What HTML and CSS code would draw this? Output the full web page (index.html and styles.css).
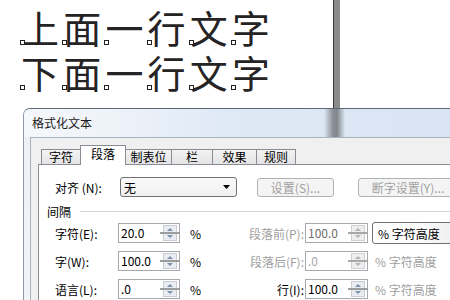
FILE: index.html
```html
<!DOCTYPE html>
<html lang="zh-CN">
<head>
<meta charset="utf-8">
<title>格式化文本</title>
<link rel="stylesheet" href="styles.css">
</head>
<body>
<div class="screen">
  <div class="canvas">
    <div class="page">
      <div class="line">
        <span class="ch">上</span><span class="ch">面</span><span class="ch">一</span><span class="ch">行</span><span class="ch">文</span><span class="ch">字</span>
      </div>
      <div class="line">
        <span class="ch">下</span><span class="ch">面</span><span class="ch">一</span><span class="ch">行</span><span class="ch">文</span><span class="ch">字</span>
      </div>
    </div>
    <div class="edge"></div>
    <div class="pasteboard"></div>
  </div>

  <div class="dialog">
    <div class="titlebar">格式化文本</div>
    <div class="frame">
      <div class="client">
        <div class="tabs">
          <div class="tab t1">字符</div>
          <div class="tab t2 active">段落</div>
          <div class="tab t3">制表位</div>
          <div class="tab t4">栏</div>
          <div class="tab t5">效果</div>
          <div class="tab t6">规则</div>
        </div>
        <div class="panel">
          <div class="row first">
            <span class="lab wide">对齐 (N):</span>
            <div class="combo align">
              <span>无</span>
              <svg class="arrow" width="7" height="4" viewBox="0 0 7 4"><path d="M0 0h7L3.5 4z" fill="#000"/></svg>
            </div>
            <div class="btn b1">设置(S)...</div>
            <div class="btn b2">断字设置(Y)...</div>
          </div>

          <div class="group"><span>间隔</span><i class="rule"></i></div>

          <div class="row">
            <span class="lab">字符(E):</span>
            <div class="spin"><span class="val">20.0</span>
              <svg class="spinner" width="20" height="16" viewBox="0 0 20 16"><rect x="3.5" y="0.5" width="13" height="15" fill="#e9ecf0" stroke="#c9cdd2"/><rect x="0" y="7" width="20" height="2" fill="#9c9c9c"/><path d="M7 6l3-3 3 3z" fill="#7e90ab"/><path d="M7 10l3 3 3-3z" fill="#7e90ab"/></svg>
            </div>
            <span class="unit">%</span>
            <span class="rlab dis">段落前(P):</span>
            <div class="spin r semi"><span class="val">100.0</span>
              <svg class="spinner" width="20" height="16" viewBox="0 0 20 16"><rect x="3.5" y="0.5" width="13" height="15" fill="#eeeeee" stroke="#d0d0d0"/><rect x="0" y="7" width="20" height="2" fill="#a8a8a8"/><path d="M7 6l3-3 3 3z" fill="#b4b4b4"/><path d="M7 10l3 3 3-3z" fill="#b4b4b4"/></svg>
            </div>
            <div class="combo tailbox">% 字符高度</div>
          </div>

          <div class="row">
            <span class="lab">字(W):</span>
            <div class="spin"><span class="val">100.0</span>
              <svg class="spinner" width="20" height="16" viewBox="0 0 20 16"><rect x="3.5" y="0.5" width="13" height="15" fill="#e9ecf0" stroke="#c9cdd2"/><rect x="0" y="7" width="20" height="2" fill="#9c9c9c"/><path d="M7 6l3-3 3 3z" fill="#7e90ab"/><path d="M7 10l3 3 3-3z" fill="#7e90ab"/></svg>
            </div>
            <span class="unit">%</span>
            <span class="rlab dis">段落后(F):</span>
            <div class="spin r dis"><span class="val">.0</span>
              <svg class="spinner" width="20" height="16" viewBox="0 0 20 16"><rect x="3.5" y="0.5" width="13" height="15" fill="#eeeeee" stroke="#d0d0d0"/><rect x="0" y="7" width="20" height="2" fill="#a8a8a8"/><path d="M7 6l3-3 3 3z" fill="#b4b4b4"/><path d="M7 10l3 3 3-3z" fill="#b4b4b4"/></svg>
            </div>
            <span class="tail dis">% 字符高度</span>
          </div>

          <div class="row">
            <span class="lab">语言(L):</span>
            <div class="spin"><span class="val">.0</span>
              <svg class="spinner" width="20" height="16" viewBox="0 0 20 16"><rect x="3.5" y="0.5" width="13" height="15" fill="#e9ecf0" stroke="#c9cdd2"/><rect x="0" y="7" width="20" height="2" fill="#9c9c9c"/><path d="M7 6l3-3 3 3z" fill="#7e90ab"/><path d="M7 10l3 3 3-3z" fill="#7e90ab"/></svg>
            </div>
            <span class="unit">%</span>
            <span class="rlab">行(I):</span>
            <div class="spin r"><span class="val">100.0</span>
              <svg class="spinner" width="20" height="16" viewBox="0 0 20 16"><rect x="3.5" y="0.5" width="13" height="15" fill="#e9ecf0" stroke="#c9cdd2"/><rect x="0" y="7" width="20" height="2" fill="#9c9c9c"/><path d="M7 6l3-3 3 3z" fill="#7e90ab"/><path d="M7 10l3 3 3-3z" fill="#7e90ab"/></svg>
            </div>
            <span class="tail dis">% 字符高度</span>
          </div>
        </div>
      </div>
    </div>
  </div>
</div>
</body>
</html>
```

FILE: styles.css
```css
* { box-sizing: border-box; }

html, body {
  margin: 0;
  padding: 0;
  background: #fff;
}

body {
  width: 450px;
  height: 300px;
  overflow: hidden;
  font-family: "Noto Sans CJK SC", "Noto Sans", sans-serif;
  font-size: 12px;
  color: #000;
}

.screen {
  width: 450px;
  height: 300px;
  overflow: hidden;
}

/* ---------- drawing canvas ---------- */
.canvas {
  display: flex;
  height: 108px;
  background: #fff;
}

.page {
  width: 333px;
  padding: 4px 0 0 21px;
  background: #fff;
}

.line {
  display: flex;
  height: 45px;
}

.ch {
  position: relative;
  display: block;
  width: 42.2px;
  height: 45px;
  font-size: 38px;
  line-height: 45px;
  color: #262324;
}

.ch::after {
  content: "";
  position: absolute;
  left: -1px;
  bottom: 4px;
  width: 3px;
  height: 3px;
  border: 1px solid #222;
  background: #fff;
}

.edge {
  width: 7px;
  border-left: 1px solid #3a3a3a;
  background: #8b8b8b;
}

.pasteboard {
  flex: 1;
  background: #fff;
}

/* ---------- dialog ---------- */
.dialog {
  margin-left: 23px;
  width: 460px;
  height: 192px;
  border-top: 1px solid #5d6977;
  border-left: 1px solid #8f9aa6;
  border-top-left-radius: 7px;
  background: #eef2f7;
}

.titlebar {
  height: 28px;
  padding-left: 8px;
  line-height: 28px;
  font-size: 12px;
  color: #1a1a1a;
  border-top-left-radius: 6px;
  background:
    linear-gradient(to right, rgba(70,70,70,0) 300px, rgba(70,70,70,.55) 309px, rgba(70,70,70,.6) 313px, rgba(70,70,70,0) 321px),
    linear-gradient(to right, #f5f7fa 0, #eef3f9 90px, #dfe9f6 200px, #d8e4f3 100%);
}

.frame {
  padding-left: 6px;
  height: 163px;
  background: linear-gradient(to bottom, #eef2f7, #f1f4f8);
}

.client {
  height: 100%;
  border-top: 1px solid #a9b3be;
  border-left: 1px solid #a9b3be;
  background: #f0f0f0;
  padding: 7px 0 0 7px;
}

/* ---------- tabs ---------- */
.tabs {
  display: flex;
  align-items: flex-end;
  height: 19px;
  margin-left: 3px;
}

.tab {
  position: relative;
  height: 15px;
  margin-right: -1px;
  border: 1px solid #898c95;
  border-bottom: none;
  background: linear-gradient(to bottom, #f3f3f3, #e4e4e4);
  text-align: center;
  line-height: 14px;
  font-size: 12px;
}

.tab.active {
  height: 20px;
  margin-bottom: -1px;
  background: #fff;
  z-index: 1;
  line-height: 14px;
  padding-top: 1px;
}

.t1 { width: 40px; }
.t2 { width: 46px; }
.t3 { width: 47px; }
.t4 { width: 42px; }
.t5 { width: 45px; }
.t6 { width: 40px; }

/* ---------- panel ---------- */
.panel {
  height: 160px;
  border: 1px solid #898c95;
  border-bottom: none;
  border-right: none;
  background: #fff;
  padding: 12px 0 0 16px;
}

.row {
  display: flex;
  align-items: center;
  height: 20px;
  margin-top: 8px;
  white-space: nowrap;
}

.row.first {
  margin-top: 0;
}

.lab {
  width: 63px;
}

.lab.wide {
  width: 65px;
}

.combo {
  display: flex;
  align-items: center;
  border: 1px solid #707070;
  border-radius: 3px;
  background: linear-gradient(to bottom, #f6f6f6 0, #eeeeee 45%, #e2e2e2 55%, #d8d8d8 100%);
}

.combo.align {
  width: 117px;
  height: 20px;
  padding: 0 6px 0 3px;
  justify-content: space-between;
  background: linear-gradient(to bottom, #fafafa, #f0f0f0);
}

.btn {
  height: 19px;
  border: 1px solid #adb2b5;
  border-radius: 3px;
  background: #f4f4f4;
  color: #a0a0a0;
  text-align: center;
  line-height: 17px;
}

.btn.b1 {
  width: 77px;
  margin-left: 20px;
}

.btn.b2 {
  width: 100px;
  margin-left: 24px;
}

.group {
  display: flex;
  align-items: center;
  height: 16px;
  margin: 6px 0 0 -8px;
}

.group .rule {
  flex: 1;
  height: 1px;
  margin-left: 9px;
  background: #d5d5d5;
}

.row + .row {
  margin-top: 8px;
}

.group + .row {
  margin-top: 4px;
}

.spin {
  display: flex;
  align-items: center;
  justify-content: space-between;
  width: 62px;
  height: 20px;
  border: 1px solid #a5a8ae;
  background: #fff;
  padding-left: 2px;
}

.spin.r {
  width: 63px;
}

.spin .val {
  line-height: 16px;
}

.spin .spinner {
  display: block;
  margin-right: -1px;
}

.spin.semi .val {
  color: #6e6e6e;
}

.spin.dis .val {
  color: #a8a8a8;
}

.unit {
  width: 61px;
  padding-left: 10px;
}

.rlab {
  width: 64px;
  text-align: right;
  padding-right: 1px;
}

.dis {
  color: #a0a0a0;
}

.combo.tailbox {
  margin-left: 4px;
  width: 100px;
  height: 22px;
  padding-left: 5px;
  background: linear-gradient(to right, #ffffff 0, #fbfbfb 50px, #e8e8e8 100%);
}

.tail {
  margin-left: 7px;
}
```
